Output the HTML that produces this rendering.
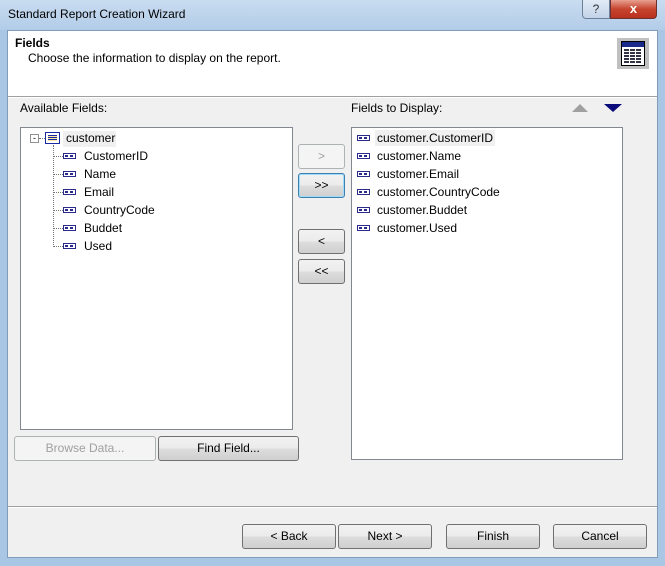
<!DOCTYPE html>
<html><head><style>
*{margin:0;padding:0;box-sizing:border-box}
body{width:665px;height:566px;overflow:hidden;font-family:"Liberation Sans",sans-serif;font-size:12px;background:#a9c6e4;position:relative;color:#000}
.abs{position:absolute}
.title{left:0;top:0;width:665px;height:30px;background:linear-gradient(#c9dcf0,#b2cce8)}
.client{left:7px;top:30px;width:651px;height:528px;background:#f0f0f0;border:1px solid #7f9db9}
.hdr{left:8px;top:31px;width:649px;height:66px;background:#fff;border-bottom:1px solid #a0a0a0}
.box{background:#fff;border:1px solid #828790}
.btn{border:1px solid #707070;border-radius:3px;background:linear-gradient(#f2f2f2 0,#ebebeb 50%,#dddddd 51%,#cfcfcf 100%);text-align:center;font-size:12px}
.dis{border-color:#adb2b5;background:#f4f4f4;color:#a0a0a0}
.fi{position:absolute;display:block;width:13px;height:6px;border:1px solid #2a2a8a;background:#fff}
.fi:after{content:"";position:absolute;left:1px;top:1px;width:3px;height:2px;background:#2a2a8a;box-shadow:5px 0 0 #2a2a8a}
.t{position:absolute;font-size:12px}
</style></head><body>
<div class="abs title"></div>
<div class="abs" style="left:8px;top:7px;font-size:12px">Standard Report Creation Wizard</div>
<div class="abs" style="left:582px;top:0;width:28px;height:19px;border:1px solid #6d7f9a;border-top:none;border-radius:0 0 0 4px;background:linear-gradient(#e1ebf6,#c3d3e8);text-align:center;color:#333;font-size:12px;line-height:18px">?</div>
<div class="abs" style="left:610px;top:0;width:47px;height:19px;border:1px solid #6d3030;border-top:none;border-radius:0 0 4px 0;background:linear-gradient(#e8a090,#c7452f 50%,#b8301e);text-align:center;color:#fff;font-weight:bold;font-size:13px;line-height:18px">x</div>
<div class="abs client"></div>
<div class="abs hdr"></div>
<div class="abs" style="left:15px;top:36px;font-weight:bold">Fields</div>
<div class="abs" style="left:28px;top:51px">Choose the information to display on the report.</div>
<div class="abs" style="left:617px;top:38px;width:32px;height:31px;background:#c0c0c0;padding:3px 4px">
 <div style="width:24px;height:25px;border:1px solid #000;background:#fff;position:relative">
  <div style="height:5px;background:#1a2a8a"></div>
  <div style="position:absolute;left:2px;top:7px;width:18px;height:14px;background:repeating-linear-gradient(90deg,#334 0 5px,transparent 5px 6px);-webkit-mask:repeating-linear-gradient(#000 0 2px,transparent 2px 3px);mask:repeating-linear-gradient(#000 0 2px,transparent 2px 3px)"></div>
 </div>
</div>
<div class="abs" style="left:8px;top:97px;width:649px;height:1px;background:#fff"></div>
<div class="abs" style="left:20px;top:101px">Available Fields:</div>
<div class="abs" style="left:351px;top:101px">Fields to Display:</div>
<div class="abs" style="left:572px;top:104px;width:0;height:0;border-left:8px solid transparent;border-right:8px solid transparent;border-bottom:8px solid #a0a0a0"></div>
<div class="abs" style="left:604px;top:104px;width:0;height:0;border-left:9px solid transparent;border-right:9px solid transparent;border-top:8px solid #0a0a7a"></div>

<div class="abs box" style="left:20px;top:127px;width:273px;height:303px">
 <div class="abs" style="left:9px;top:6px;width:9px;height:9px;border:1px solid #919191;background:#fff;font-size:9px;line-height:6px;text-align:center">-</div>
 <div class="abs" style="left:18px;top:10px;width:6px;border-top:1px dotted #777"></div>
 <div class="abs" style="left:24px;top:4px;width:15px;height:12px;border:1px solid #1a2aa0;background:#fff"><div style="margin:2px;width:9px;height:6px;background:repeating-linear-gradient(#1a2aa0 0 1px,#fde9a0 1px 2px)"></div></div>
 <div class="abs" style="left:42px;top:3px;width:53px;height:16px;background:#f0f0f0"></div>
 <div class="t" style="left:45px;top:3px">customer</div>
 <div class="abs" style="left:32px;top:17px;height:102px;border-left:1px dotted #777"></div>
 <div class="abs" style="left:32px;top:28px">
  <div class="abs" style="left:0;top:0;width:10px;border-top:1px dotted #777"></div>
  <div class="abs" style="left:0;top:18px;width:10px;border-top:1px dotted #777"></div>
  <div class="abs" style="left:0;top:36px;width:10px;border-top:1px dotted #777"></div>
  <div class="abs" style="left:0;top:54px;width:10px;border-top:1px dotted #777"></div>
  <div class="abs" style="left:0;top:72px;width:10px;border-top:1px dotted #777"></div>
  <div class="abs" style="left:0;top:90px;width:10px;border-top:1px dotted #777"></div>
 </div>
 <span class="fi" style="left:42px;top:25px"></span><div class="t" style="left:63px;top:21px">CustomerID</div>
 <span class="fi" style="left:42px;top:43px"></span><div class="t" style="left:63px;top:39px">Name</div>
 <span class="fi" style="left:42px;top:61px"></span><div class="t" style="left:63px;top:57px">Email</div>
 <span class="fi" style="left:42px;top:79px"></span><div class="t" style="left:63px;top:75px">CountryCode</div>
 <span class="fi" style="left:42px;top:97px"></span><div class="t" style="left:63px;top:93px">Buddet</div>
 <span class="fi" style="left:42px;top:115px"></span><div class="t" style="left:63px;top:111px">Used</div>
</div>

<div class="abs box" style="left:351px;top:127px;width:272px;height:333px">
 <div class="abs" style="left:23px;top:2px;width:120px;height:16px;background:#f0f0f0"></div>
 <span class="fi" style="left:5px;top:7px"></span><div class="t" style="left:25px;top:3px">customer.CustomerID</div>
 <span class="fi" style="left:5px;top:25px"></span><div class="t" style="left:25px;top:21px">customer.Name</div>
 <span class="fi" style="left:5px;top:43px"></span><div class="t" style="left:25px;top:39px">customer.Email</div>
 <span class="fi" style="left:5px;top:61px"></span><div class="t" style="left:25px;top:57px">customer.CountryCode</div>
 <span class="fi" style="left:5px;top:79px"></span><div class="t" style="left:25px;top:75px">customer.Buddet</div>
 <span class="fi" style="left:5px;top:97px"></span><div class="t" style="left:25px;top:93px">customer.Used</div>
</div>

<div class="abs btn dis" style="left:298px;top:144px;width:47px;height:25px;line-height:23px">&gt;</div>
<div class="abs btn" style="left:298px;top:173px;width:47px;height:25px;line-height:23px;border-color:#3c7fb1;box-shadow:inset 0 0 0 1px #9fdcf8">&gt;&gt;</div>
<div class="abs btn" style="left:298px;top:229px;width:47px;height:25px;line-height:23px">&lt;</div>
<div class="abs btn" style="left:298px;top:259px;width:47px;height:25px;line-height:23px">&lt;&lt;</div>

<div class="abs btn dis" style="left:14px;top:436px;width:142px;height:25px;line-height:23px">Browse Data...</div>
<div class="abs btn" style="left:158px;top:436px;width:141px;height:25px;line-height:23px">Find Field...</div>

<div class="abs" style="left:8px;top:506px;width:649px;height:1px;background:#a0a0a0"></div>
<div class="abs" style="left:8px;top:507px;width:649px;height:1px;background:#fff"></div>

<div class="abs btn" style="left:242px;top:524px;width:94px;height:25px;line-height:23px">&lt; Back</div>
<div class="abs btn" style="left:338px;top:524px;width:94px;height:25px;line-height:23px">Next &gt;</div>
<div class="abs btn" style="left:446px;top:524px;width:94px;height:25px;line-height:23px">Finish</div>
<div class="abs btn" style="left:553px;top:524px;width:94px;height:25px;line-height:23px">Cancel</div>
</body></html>
